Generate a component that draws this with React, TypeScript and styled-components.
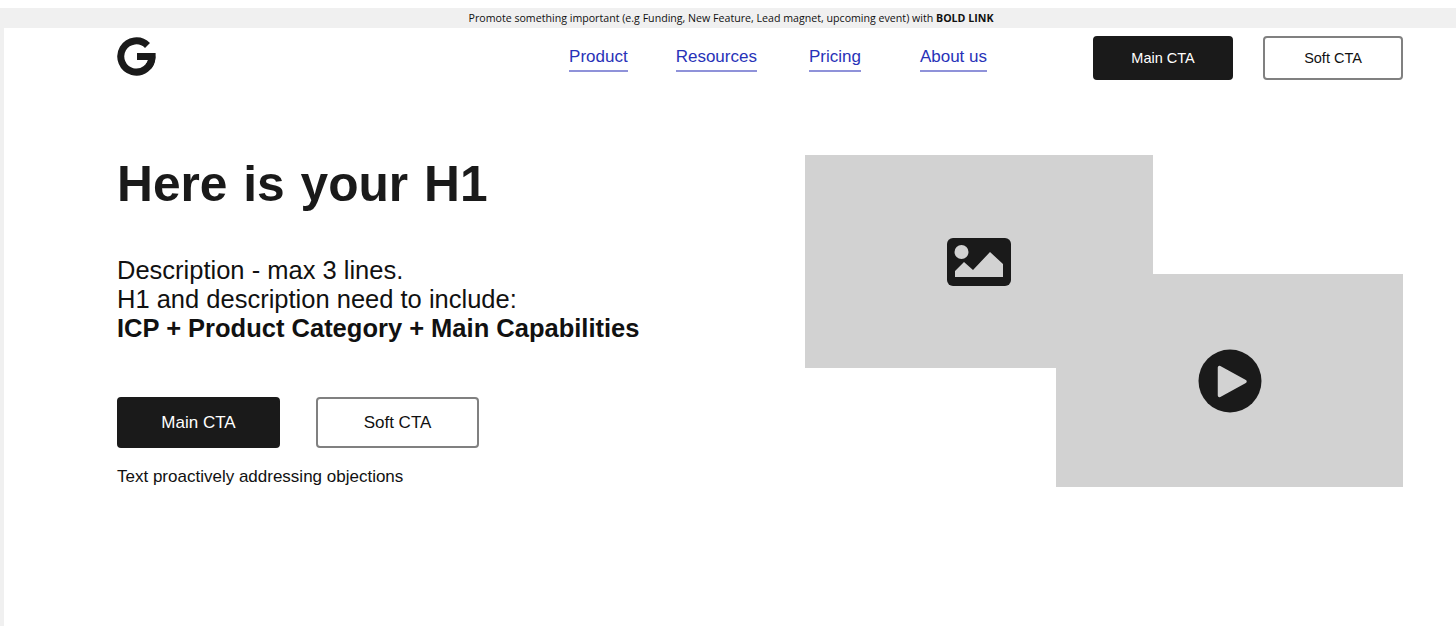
import styled, { createGlobalStyle } from "styled-components";

const links = [
  { label: "Product", gap: 0 },
  { label: "Resources", gap: 48 },
  { label: "Pricing", gap: 52 },
  { label: "About us", gap: 59 },
];

export default function App() {
  return (
    <>
      <GlobalStyle />
      <Page>
        <Banner>
          Promote something important (e.g Funding, New Feature, Lead magnet, upcoming event) with&nbsp;
          <b>BOLD LINK</b>
        </Banner>
        <Nav>
          <Logo viewBox="0 0 39 39" aria-label="Logo">
            <path d="M30.500 8.500A15.600 15.600 0 1 0 35 19.500" fill="none" stroke="#1a1a1a" strokeWidth="7" />
            <path d="M20 16h18.600c.4 7-1.500 12-4 15.500l-6-4.500c1.500-1.500 2.200-3 2.500-4H20z" fill="#1a1a1a" />
          </Logo>
          <NavLinks>
            {links.map((link) => (
              <NavLink key={link.label} $gap={link.gap}>
                {link.label}
              </NavLink>
            ))}
          </NavLinks>
          <NavButtons>
            <Cta $kind="main" $size="nav">Main CTA</Cta>
            <Cta $kind="soft" $size="nav">Soft CTA</Cta>
          </NavButtons>
        </Nav>
        <Hero>
          <Copy>
            <Title>Here is your H1</Title>
            <Description>
              Description - max 3 lines.
              <br />
              H1 and description need to include:
              <br />
              <b>ICP + Product Category + Main Capabilities</b>
            </Description>
            <HeroButtons>
              <Cta $kind="main" $size="hero">Main CTA</Cta>
              <Cta $kind="soft" $size="hero">Soft CTA</Cta>
            </HeroButtons>
            <Objections>Text proactively addressing objections</Objections>
          </Copy>
          <Collage>
            <ImageTile>
              <svg width="64" height="48" viewBox="0 0 64 48" aria-label="Image">
                <rect width="64" height="48" rx="6" fill="#1a1a1a" />
                <circle cx="14.500" cy="14" r="7" fill="#d2d2d2" />
                <path d="M8 39V33L17 24L26 32L43 14L56 26V39Z" fill="#d2d2d2" />
              </svg>
            </ImageTile>
            <VideoTile>
              <svg width="64" height="64" viewBox="0 0 64 64" aria-label="Play video">
                <circle cx="32" cy="32" r="31.500" fill="#1a1a1a" />
                <path d="M21.500 18.500V46.500L47 32.500Z" fill="#d2d2d2" stroke="#d2d2d2" strokeWidth="3.500" strokeLinejoin="round" />
              </svg>
            </VideoTile>
          </Collage>
        </Hero>
      </Page>
    </>
  );
}

const GlobalStyle = createGlobalStyle`
  html, body {
    margin: 0;
    background: #fff;
  }
  body {
    font-family: "Liberation Sans", Arial, sans-serif;
    color: #1a1a1a;
  }
`;

const Page = styled("div")`
  box-sizing: border-box;
  height: 618px;
  margin-top: 8px;
  border-left: 4px solid #f0f0f0;
  overflow: hidden;
`;

const Banner = styled("div")`
  height: 20px;
  margin-left: -4px;
  padding-left: 6px;
  background: #f0f0f0;
  font-family: "Open Sans", sans-serif;
  font-size: 10.640px;
  line-height: 20px;
  text-align: center;
  color: #111;
`;

const Nav = styled("div")`
  display: flex;
  align-items: flex-start;
  padding: 8px 53px 0 113px;
`;

const Logo = styled("svg")`
  width: 39px;
  height: 39px;
  margin-top: 1px;
`;

const NavLinks = styled("div")`
  display: flex;
  margin-left: auto;
  margin-right: 106px;
  padding-top: 10px;
`;

const NavLink = styled("a")<{ $gap: number }>`
  margin-left: ${(p) => p.$gap}px;
  padding-bottom: 2px;
  border-bottom: 2px solid #8f92d9;
  color: #2832b8;
  font-size: 17px;
  line-height: 22px;
`;

const NavButtons = styled("div")`
  display: flex;
  gap: 30px;
`;

const Cta = styled("button")<{ $kind: "main" | "soft"; $size: "nav" | "hero" }>`
  box-sizing: border-box;
  width: ${(p) => (p.$size === "nav" ? 140 : 163)}px;
  height: ${(p) => (p.$size === "nav" ? 44 : 51)}px;
  border: 2px solid ${(p) => (p.$kind === "main" ? "#1a1a1a" : "#808080")};
  border-radius: 4px;
  background: ${(p) => (p.$kind === "main" ? "#1a1a1a" : "#fff")};
  color: ${(p) => (p.$kind === "main" ? "#fff" : "#111")};
  font-family: inherit;
  font-size: ${(p) => (p.$size === "nav" ? 14.500 : 17)}px;
  padding: 0;
`;

const Hero = styled("div")`
  display: flex;
  justify-content: space-between;
  padding: 0 53px 0 113px;
`;

const Copy = styled("div")`
  display: flex;
  flex-direction: column;
  align-items: flex-start;
`;

const Title = styled("h1")`
  margin: 74px 0 0;
  font-size: 49.700px;
  line-height: 60px;
  font-weight: 700;
  word-spacing: 2px;
  color: #1a1a1a;
`;

const Description = styled("p")`
  margin: 42px 0 0;
  font-size: 25.500px;
  line-height: 29px;
  color: #111;
`;

const HeroButtons = styled("div")`
  display: flex;
  gap: 36px;
  margin-top: 54px;
`;

const Objections = styled("p")`
  margin: 18px 0 0;
  font-size: 17px;
  line-height: 22px;
  color: #111;
`;

const Collage = styled("div")`
  display: grid;
  grid-template-columns: 251px 97px 250px;
  grid-template-rows: 119px 94px 119px;
  margin-top: 75px;
`;

const Tile = styled("div")`
  display: flex;
  align-items: center;
  justify-content: center;
  background: #d2d2d2;
`;

const ImageTile = styled(Tile)`
  grid-column: 1 / 3;
  grid-row: 1 / 3;
`;

const VideoTile = styled(Tile)`
  grid-column: 2 / 4;
  grid-row: 2 / 4;
`;
